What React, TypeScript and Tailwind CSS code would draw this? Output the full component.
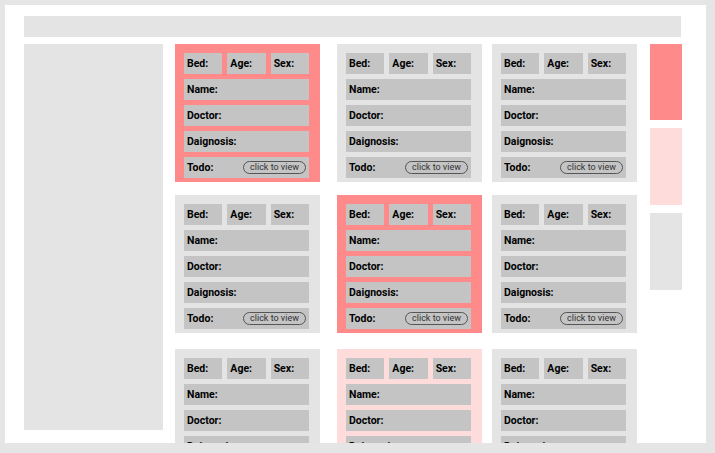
const cards = [
  ["red", "gray", "gray"],
  ["gray", "red", "gray"],
  ["gray", "pink", "gray"],
];

const bgFor = (c: string) =>
  c === "red" ? "bg-[#ff8a8a]" : c === "pink" ? "bg-[#ffdcdc]" : "bg-[#e4e4e4]";

const Box = ({ children, className = "" }: { children: React.ReactNode; className?: string }) => (
  <div className={`h-[21px] bg-[#c4c4c4] flex items-center pl-[3px] text-[10.5px] font-bold text-black ${className}`}>
    {children}
  </div>
);

const PatientCard = ({ color }: { color: string }) => (
  <div className={`w-[145px] h-[138px] ${bgFor(color)} pt-[9px] pl-[9px] pr-[11px] flex flex-col gap-[5px]`}>
    <div className="flex gap-[5px]">
      <Box className="flex-1">Bed:</Box>
      <Box className="flex-1">Age:</Box>
      <Box className="flex-1">Sex:</Box>
    </div>
    <Box>Name:</Box>
    <Box>Doctor:</Box>
    <Box>Daignosis:</Box>
    <Box className="justify-between pr-[3px]">
      <span>Todo:</span>
      <span className="h-[13px] w-[63px] rounded-full border border-[#555] flex items-center justify-center text-[9px] font-normal text-[#333] leading-none">
        click to view
      </span>
    </Box>
  </div>
);

export default function App() {
  return (
    <div className="w-[715px] h-[453px] bg-[#e5e5e5] overflow-hidden pl-[5px] pt-[5px]" style={{ fontFamily: "Roboto, 'Liberation Sans', sans-serif" }}>
      {/* frame title, mostly cut off */}
      <div className="-mt-[14px] h-[14px] pl-[15px] text-[11px] leading-none text-[#9a9a9a]">Ward</div>
      <div className="w-[701px] h-[438px] bg-white overflow-hidden pt-[11px] pl-[19px]">
        {/* header */}
        <div className="w-[657px] h-[21px] bg-[#e4e4e4]" />

        <div className="flex mt-[7px]">
          {/* sidebar */}
          <div className="w-[139px] h-[386px] bg-[#e4e4e4]" />

          {/* card grid */}
          <div className="ml-[12px] flex flex-col">
            {cards.map((row, i) => (
              <div key={i} className={`flex ${i === 1 ? "mt-[13px]" : i === 2 ? "mt-[16px]" : ""}`}>
                <PatientCard color={row[0]} />
                <div className="ml-[17px]">
                  <PatientCard color={row[1]} />
                </div>
                <div className="ml-[10px]">
                  <PatientCard color={row[2]} />
                </div>
              </div>
            ))}
          </div>

          {/* legend */}
          <div className="ml-[13px] w-[32px] flex flex-col gap-[8px]">
            <div className="h-[76px] bg-[#ff8a8a]" />
            <div className="h-[77px] bg-[#ffdcdc]" />
            <div className="h-[77px] bg-[#e4e4e4]" />
          </div>
        </div>
      </div>
    </div>
  );
}
